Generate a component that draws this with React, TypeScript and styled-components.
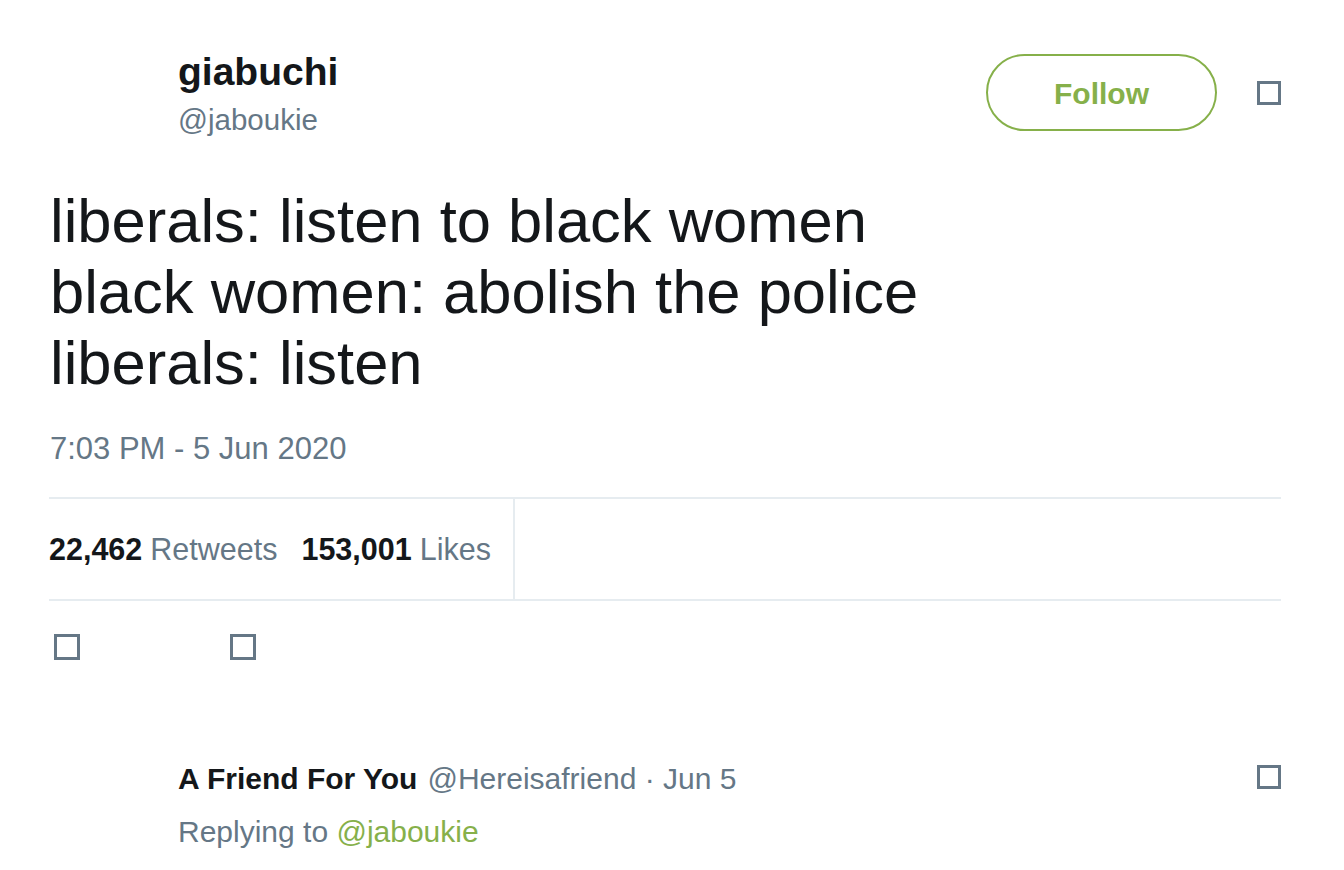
import React from 'react';
import styled, { createGlobalStyle } from 'styled-components';

const GlobalStyle = createGlobalStyle`
  body {
    margin: 0;
    background: #ffffff;
    font-family: "Liberation Sans", Arial, sans-serif;
    color: #14171a;
  }
`;

const Page = styled.div`
  width: 1232px;
  margin-left: 49px;
  padding-top: 50px;
`;

const Header = styled.div`
  display: flex;
  align-items: flex-start;
`;

const UserBlock = styled.div`
  display: flex;
  flex-direction: column;
  margin-left: 129px;
  flex: 1;
`;

const Name = styled.div`
  font-size: 39px;
  font-weight: 700;
  line-height: 44px;
`;

const Handle = styled.div`
  font-size: 29.5px;
  line-height: 35px;
  margin-top: 8px;
  color: #657786;
`;

const HeaderActions = styled.div`
  display: flex;
  align-items: center;
  gap: 40px;
  margin-top: 4px;
`;

const FollowButton = styled.button`
  width: 231px;
  height: 77px;
  padding-top: 4px;
  border: 2px solid #86b04a;
  border-radius: 40px;
  background: #ffffff;
  color: #86b04a;
  font-family: "Liberation Sans", Arial, sans-serif;
  font-size: 30px;
  font-weight: 700;
  cursor: pointer;
`;

const Square = styled.span<{ $size?: number }>`
  display: inline-block;
  box-sizing: border-box;
  width: ${(p) => p.$size ?? 24}px;
  height: ${(p) => p.$size ?? 24}px;
  border: 3px solid #657786;
  flex-shrink: 0;
`;

const TweetText = styled.div`
  margin-top: 48px;
  font-size: 61.5px;
  line-height: 71px;
  margin-left: 1px;
`;

const Timestamp = styled.div`
  margin-top: 33px;
  font-size: 31px;
  line-height: 36px;
  color: #657786;
  margin-left: 1px;
`;

const StatsBar = styled.div`
  display: flex;
  margin-top: 30px;
  border-top: 2px solid #e6ecf0;
  border-bottom: 2px solid #e6ecf0;
  height: 100px;
`;

const StatsGroup = styled.div`
  display: flex;
  align-items: flex-start;
  padding-top: 32px;
  padding-right: 22px;
  border-right: 2px solid #e6ecf0;
  gap: 24px;
`;

const Stat = styled.div`
  font-size: 30.5px;
  line-height: 36px;
  color: #657786;
  white-space: nowrap;
`;

const StatNum = styled.span`
  font-weight: 700;
  color: #14171a;
  margin-right: 8px;
`;

const Actions = styled.div`
  display: flex;
  gap: 150px;
  margin-top: 33px;
  padding-left: 5px;
`;

const Reply = styled.div`
  display: flex;
  align-items: flex-start;
  margin-top: 101px;
`;

const ReplyBody = styled.div`
  flex: 1;
  margin-left: 129px;
`;

const ReplyHead = styled.div`
  font-size: 30px;
  line-height: 36px;
  color: #657786;
  white-space: nowrap;
`;

const ReplyName = styled.span`
  font-weight: 700;
  color: #14171a;
  margin-right: 10px;
`;

const ReplyingTo = styled.div`
  margin-top: 17px;
  font-size: 30px;
  line-height: 36px;
  color: #657786;
`;

const Link = styled.span`
  color: #86b04a;
`;

const ReplyIcon = styled.div`
  margin-top: 4px;
`;

export default function App() {
  return (
    <>
      <GlobalStyle />
      <Page>
        <Header>
          <UserBlock>
            <Name>giabuchi</Name>
            <Handle>@jaboukie</Handle>
          </UserBlock>
          <HeaderActions>
            <FollowButton>Follow</FollowButton>
            <Square />
          </HeaderActions>
        </Header>

        <TweetText>
          liberals: listen to black women
          <br />
          black women: abolish the police
          <br />
          liberals: listen
        </TweetText>

        <Timestamp>7:03 PM - 5 Jun 2020</Timestamp>

        <StatsBar>
          <StatsGroup>
            <Stat>
              <StatNum>22,462</StatNum>Retweets
            </Stat>
            <Stat>
              <StatNum>153,001</StatNum>Likes
            </Stat>
          </StatsGroup>
        </StatsBar>

        <Actions>
          <Square $size={26} />
          <Square $size={26} />
        </Actions>

        <Reply>
          <ReplyBody>
            <ReplyHead>
              <ReplyName>A Friend For You</ReplyName>@Hereisafriend · Jun 5
            </ReplyHead>
            <ReplyingTo>
              Replying to <Link>@jaboukie</Link>
            </ReplyingTo>
          </ReplyBody>
          <ReplyIcon>
            <Square />
          </ReplyIcon>
        </Reply>
      </Page>
    </>
  );
}
